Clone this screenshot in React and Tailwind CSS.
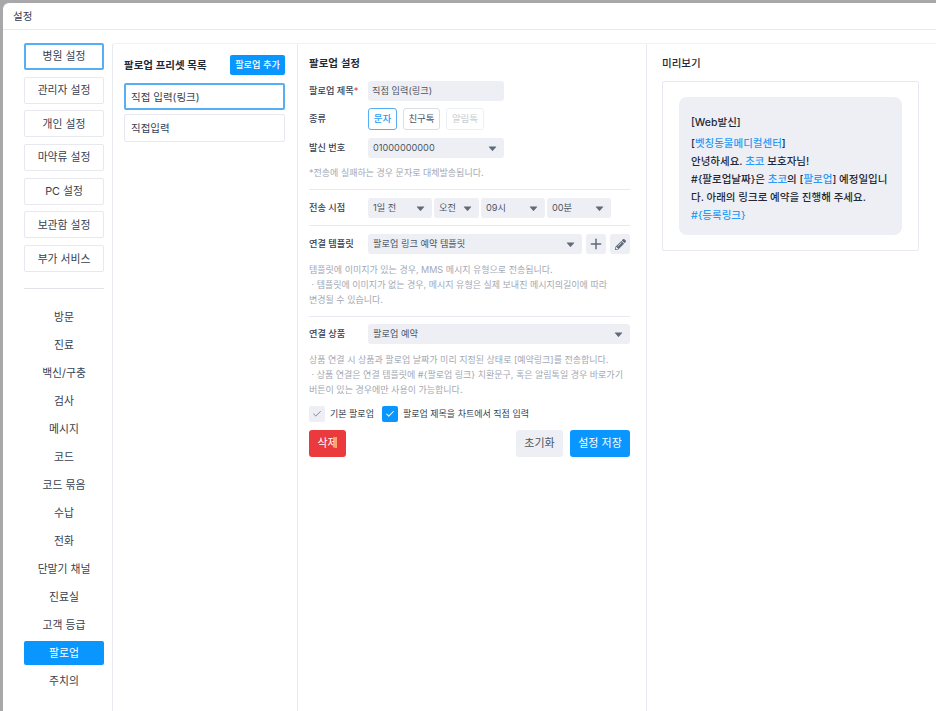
import React from "react";
import { Plus, Check } from "lucide-react";
import { FaPencilAlt } from "react-icons/fa";

const topMenu = ["병원 설정", "관리자 설정", "개인 설정", "마약류 설정", "PC 설정", "보관함 설정", "부가 서비스"];
const subMenu = ["방문", "진료", "백신/구충", "검사", "메시지", "코드", "코드 묶음", "수납", "전화", "단말기 채널", "진료실", "고객 등급", "팔로업", "주치의"];

const Caret = () => (
  <svg width="9" height="5" viewBox="0 0 10 6" className="shrink-0">
    <path d="M1 0.5h8a.5.5 0 0 1 .4.8L5.4 5.6a.5.5 0 0 1-.8 0L.6 1.3A.5.5 0 0 1 1 .5z" fill="#5f6b7a" />
  </svg>
);

const Select = ({ value, className = "" }) => (
  <div className={`h-5 bg-[#eeeff4] rounded-[3px] pl-[5px] pr-[7px] flex items-center justify-between text-[9.2px] text-[#4b5563] ${className}`}>
    <span>{value}</span>
    <Caret />
  </div>
);

const Label = ({ children }) => (
  <div className="w-[59px] shrink-0 text-[9.2px] text-[#374151] font-medium">{children}</div>
);

const Blue = ({ children }) => <span className="text-[#2b9bf4]">{children}</span>;

export default function App() {
  return (
    <div className="h-[711px] w-[936px] overflow-hidden bg-[#a8a8ab] pl-[3px] pt-[3px] text-[#374151] [font-family:Inter,'Noto_Sans_CJK_KR',sans-serif]">
      <div className="h-full bg-white rounded-tl-[6px] flex flex-col">
        <div className="h-[27px] shrink-0 border-b border-[#e8e9f0] pl-[10px] pt-[2px] flex items-center text-[10.5px] text-[#374151]">설정</div>
        <div className="flex-1 flex min-h-0 pt-[13px] pl-[21px]">
          {/* left menu */}
          <div className="w-[80px] shrink-0 flex flex-col">
            <div className="flex flex-col gap-[6.7px]">
              {topMenu.map((m, i) => (
                <div
                  key={m}
                  className={`h-[27px] rounded-[2px] pt-[2px] flex items-center justify-center text-[10.8px] text-[#374151] ${i === 0 ? "border-2 border-[#58aef2]" : "border border-[#e8e9f0]"}`}
                >
                  {m}
                </div>
              ))}
            </div>
            <div className="h-px bg-[#e2e3ea] mt-[16px] mb-[16px]" />
            <div className="flex flex-col gap-[4px]">
              {subMenu.map((m) => (
                <div
                  key={m}
                  className={`h-6 rounded-[2px] pt-[2px] flex items-center justify-center text-[10.8px] ${m === "팔로업" ? "bg-[#0a96ff] text-white" : "text-[#374151]"}`}
                >
                  {m}
                </div>
              ))}
            </div>
          </div>

          {/* preset list */}
          <div className="ml-[8px] w-[185px] shrink-0 border-l border-t border-[#e9eaf1] border-t-[#f1f2f6] rounded-tl-[3px] pl-[11px] pr-[12px] pt-[11px] h-[700px]">
            <div className="flex items-center justify-between h-5 mb-[8px]">
              <span className="pt-[2px] text-[10.5px] font-semibold text-[#1f2937]">팔로업 프리셋 목록</span>
              <span className="h-5 w-[55px] rounded-[2px] bg-[#0a96ff] text-white text-[9.2px] font-medium flex items-center justify-center">팔로업 추가</span>
            </div>
            <div className="h-[27px] border-2 border-[#58aef2] rounded-[2px] pt-[2px] flex items-center pl-[5px] text-[10.5px]">직접 입력(링크)</div>
            <div className="h-[28px] mt-[4px] border border-[#e8e9f0] rounded-[2px] pt-[2px] flex items-center pl-[6px] text-[10.5px]">직접입력</div>
          </div>

          {/* settings */}
          <div className="w-[349px] shrink-0 border-l border-t border-[#e9eaf1] border-t-[#f1f2f6] pl-[11px] pr-[16px] pt-[12px] h-[700px]">
            <div className="text-[10.5px] font-semibold text-[#1f2937] h-4 leading-4 mb-[9px]">팔로업 설정</div>
            <div className="flex items-center h-5">
              <Label>팔로업 제목<span className="text-[#ef4444]">*</span></Label>
              <div className="w-[136px] h-5 bg-[#eeeff4] rounded-[3px] pl-[4px] flex items-center text-[9.2px] text-[#4b5563]">직접 입력(링크)</div>
            </div>
            <div className="flex items-center mt-[7px] h-[22px]">
              <Label>종류</Label>
              <div className="flex gap-[6px]">
                <span className="h-[22px] w-[29px] rounded-[3px] border border-[#58aef2] text-[#2b9bf4] text-[9.5px] flex items-center justify-center font-medium">문자</span>
                <span className="h-[22px] w-[37px] rounded-[3px] border border-[#dcdee6] text-[#4b5563] text-[9.5px] flex items-center justify-center">친구톡</span>
                <span className="h-[22px] w-[38px] rounded-[3px] border border-[#eeeff4] text-[#c9ccd4] text-[9.5px] flex items-center justify-center">알림톡</span>
              </div>
            </div>
            <div className="flex items-center mt-[8px] h-5">
              <Label>발신 번호</Label>
              <Select value="01000000000" className="w-[136px]" />
            </div>
            <div className="mt-[8px] text-[9px] leading-[14px] text-[#a3a8b3]">*전송에 실패하는 경우 문자로 대체발송됩니다.</div>
            <div className="h-px bg-[#e8e9f0] mt-[9px]" />
            <div className="flex items-center mt-[8px] h-5">
              <Label>전송 시점</Label>
              <div className="flex gap-[2px]">
                <Select value="1일 전" className="w-[64px]" />
                <Select value="오전" className="w-[45px]" />
                <Select value="09시" className="w-[64px]" />
                <Select value="00분" className="w-[64px]" />
              </div>
            </div>
            <div className="h-px bg-[#e8e9f0] mt-[7px]" />
            <div className="flex items-center mt-[8px] h-5">
              <Label>연결 템플릿</Label>
              <Select value="팔로업 링크 예약 템플릿" className="w-[214px]" />
              <span className="ml-[4px] w-5 h-5 rounded-[3px] bg-[#eeeff4] flex items-center justify-center">
                <Plus size={16} strokeWidth={2.2} className="text-[#5f6b7a]" />
              </span>
              <span className="ml-[4px] w-5 h-5 rounded-[3px] bg-[#eeeff4] flex items-center justify-center">
                <FaPencilAlt size={11} className="text-[#5f6b7a]" />
              </span>
            </div>
            <div className="mt-[8px] text-[9px] leading-[15px] text-[#a3a8b3]">
              템플릿에 이미지가 있는 경우, MMS 메시지 유형으로 전송됩니다.
              <br />
              &nbsp;· 템플릿에 이미지가 없는 경우, 메시지 유형은 실제 보내진 메시지의길이에 따라
              <br />
              변경될 수 있습니다.
            </div>
            <div className="h-px bg-[#e8e9f0] mt-[9px]" />
            <div className="flex items-center mt-[7px] h-5">
              <Label>연결 상품</Label>
              <Select value="팔로업 예약" className="flex-1" />
            </div>
            <div className="mt-[8px] text-[9px] leading-[15px] text-[#a3a8b3]">
              상품 연결 시 상품과 팔로업 날짜가 미리 지정된 상태로 [예약링크]를 전송합니다.
              <br />
              &nbsp;· 상품 연결은 연결 템플릿에 #{"{"}팔로업 링크{"}"} 치환문구, 혹은 알림톡일 경우 바로가기
              <br />
              버튼이 있는 경우에만 사용이 가능합니다.
            </div>
            <div className="flex items-center mt-[9px] h-4">
              <span className="w-4 h-4 rounded-[2px] bg-[#eeeff4] flex items-center justify-center">
                <Check size={10} strokeWidth={2} className="text-[#6b7280]" />
              </span>
              <span className="ml-[5px] text-[9px] text-[#374151]">기본 팔로업</span>
              <span className="ml-[8px] w-4 h-4 rounded-[2px] bg-[#0a96ff] flex items-center justify-center">
                <Check size={10} strokeWidth={2.5} className="text-white" />
              </span>
              <span className="ml-[5px] text-[9px] text-[#374151]">팔로업 제목을 차트에서 직접 입력</span>
            </div>
            <div className="flex items-center justify-between mt-[8px]">
              <span className="h-[27px] w-[37px] rounded-[3px] bg-[#ea3a3d] text-white text-[11px] flex items-center justify-center">삭제</span>
              <div className="flex gap-[7px]">
                <span className="h-[27px] w-[47px] rounded-[3px] bg-[#eeeff4] text-[#4b5563] text-[11px] flex items-center justify-center">초기화</span>
                <span className="h-[27px] w-[60px] rounded-[3px] bg-[#0a96ff] text-white text-[11px] flex items-center justify-center">설정 저장</span>
              </div>
            </div>
          </div>

          {/* preview */}
          <div className="flex-1 border-l border-t border-[#e9eaf1] border-t-[#f1f2f6] pl-[15px] pr-[17px] pt-[12px] h-[700px]">
            <div className="text-[10.5px] font-medium text-[#1f2937] h-4 leading-4 mb-[9px]">미리보기</div>
            <div className="h-[170px] border border-[#e8e9f0] rounded-[2px] pl-[16px] pr-[16px] pt-[15px]">
              <div className="w-[223px] h-[138px] bg-[#eeeff4] rounded-[8px] pl-[12px] pr-[14px] pt-[16px] text-[10.5px] font-medium text-[#1f2937]">
                <div className="leading-[20px] mb-[2px]">[Web발신]</div>
                <div className="leading-[18px] break-all">
                  [<Blue>벳칭동물메디컬센터</Blue>]
                  <br />
                  안녕하세요. <Blue>초코</Blue> 보호자님!
                  <br />
                  #{"{"}팔로업날짜{"}"}은 <Blue>초코</Blue>의 [<Blue>팔로업</Blue>] 예정일입니다. 아래의 링크로 예약을 진행해 주세요.
                  <br />
                  <Blue>#{"{"}등록링크{"}"}</Blue>
                </div>
              </div>
            </div>
          </div>
        </div>
      </div>
    </div>
  );
}
